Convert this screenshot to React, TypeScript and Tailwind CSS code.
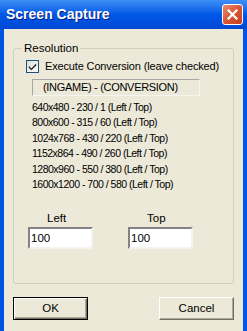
import React from 'react'

const font = { fontFamily: '"Liberation Sans", Arial, sans-serif' }

const rows = [
  '640x480 - 230 / 1 (Left / Top)',
  '800x600 - 315 / 60 (Left / Top)',
  '1024x768 - 430 / 220 (Left / Top)',
  '1152x864 - 490 / 260 (Left / Top)',
  '1280x960 - 550 / 380 (Left / Top)',
  '1600x1200 - 700 / 580 (Left / Top)',
]

function CloseButton() {
  return (
    <div className="flex h-[21px] w-[21px] items-center justify-center rounded-[3px] border border-white bg-gradient-to-br from-[#EB8B6C] via-[#DA5633] to-[#C23E1B]">
      <svg width="11" height="11" viewBox="0 0 11 11">
        <path d="M1.5 1.5 L9.5 9.5 M9.5 1.5 L1.5 9.5" stroke="white" strokeWidth="2.2" strokeLinecap="square" />
      </svg>
    </div>
  )
}

function Checkbox() {
  return (
    <div className="flex h-[13px] w-[13px] items-center justify-center border border-[#1C5180] bg-gradient-to-br from-[#DCDCD7] to-white">
      <svg width="9" height="9" viewBox="0 0 9 9">
        <path d="M0.8 3.8 L3.3 6.4 L8.2 1.4 L8.2 3.4 L3.3 8.2 L0.8 5.8 Z" fill="#1A1A1A" />
      </svg>
    </div>
  )
}

function Field({ label }: { label: string }) {
  return (
    <div className="flex w-[65px] flex-col">
      <div className="pl-[19px] text-[11.5px] leading-[13px]">{label}</div>
      <div className="mt-[2px] h-[22px] border-2 border-t-[#848284] border-l-[#848284] border-b-[#F4F3EE] border-r-[#F4F3EE] bg-white pl-[1px] text-[11.5px] leading-[18px]">
        100
      </div>
    </div>
  )
}

function Button({ label, primary }: { label: string; primary?: boolean }) {
  return (
    <div
      className={
        'flex h-[23px] w-[75px] items-center justify-center text-[11.5px] ' +
        (primary
          ? 'border border-black bg-[#ECE9D8] shadow-[inset_1px_1px_0_#fff,inset_-1px_-1px_0_#716F64,inset_-2px_-2px_0_#ACA899]'
          : 'border border-t-white border-l-white border-b-[#716F64] border-r-[#716F64] bg-[#ECE9D8] shadow-[inset_-1px_-1px_0_#ACA899]')
      }
    >
      {label}
    </div>
  )
}

export default function App() {
  return (
    <div className="flex h-[331px] w-[247px] flex-col overflow-hidden bg-[#0055E5] text-black" style={font}>
      <div className="flex h-[29px] items-center justify-between bg-gradient-to-b from-[#3D8FF5] via-[#0058E6] to-[#0048D4] pl-[6px] pr-[4px]">
        <span className="text-[14px] font-bold text-white [text-shadow:1px_1px_0_#0A1E80]">Screen Capture</span>
        <CloseButton />
      </div>
      <div className="mx-[4px] flex flex-1 flex-col bg-[#ECE9D8] px-[9px] pt-[19px]">
        <div className="relative h-[236px] rounded-[3px] border border-[#D0D0BF] pl-[12px] pt-[11px]">
          <span className="absolute left-[8px] top-[-7px] bg-[#ECE9D8] px-[2px] text-[11.5px] leading-[13px]">Resolution</span>
          <div className="flex h-[13px] items-center">
            <Checkbox />
            <span className="ml-[6px] text-[11px] leading-[13px] tracking-[-0.15px]">Execute Conversion (leave checked)</span>
          </div>
          <div className="ml-[6px] mt-[6px] h-[17px] w-[168px] border border-t-[#A7A6AA] border-l-[#A7A6AA] border-b-[#F6F5F0] border-r-[#F6F5F0] pl-[10px] text-[11px] leading-[15px] tracking-[-0.3px]">
            (INGAME) - (CONVERSION)
          </div>
          <div className="ml-[6px] mt-[4px] flex flex-col">
            {rows.map((r) => (
              <div key={r} className="text-[10.5px] leading-[15.4px] tracking-[-0.5px]">
                {r}
              </div>
            ))}
          </div>
          <div className="ml-[2px] mt-[20px] flex gap-[35px]">
            <Field label="Left" />
            <Field label="Top" />
          </div>
        </div>
        <div className="mt-[13px] flex justify-between">
          <Button label="OK" primary />
          <Button label="Cancel" />
        </div>
      </div>
    </div>
  )
}
